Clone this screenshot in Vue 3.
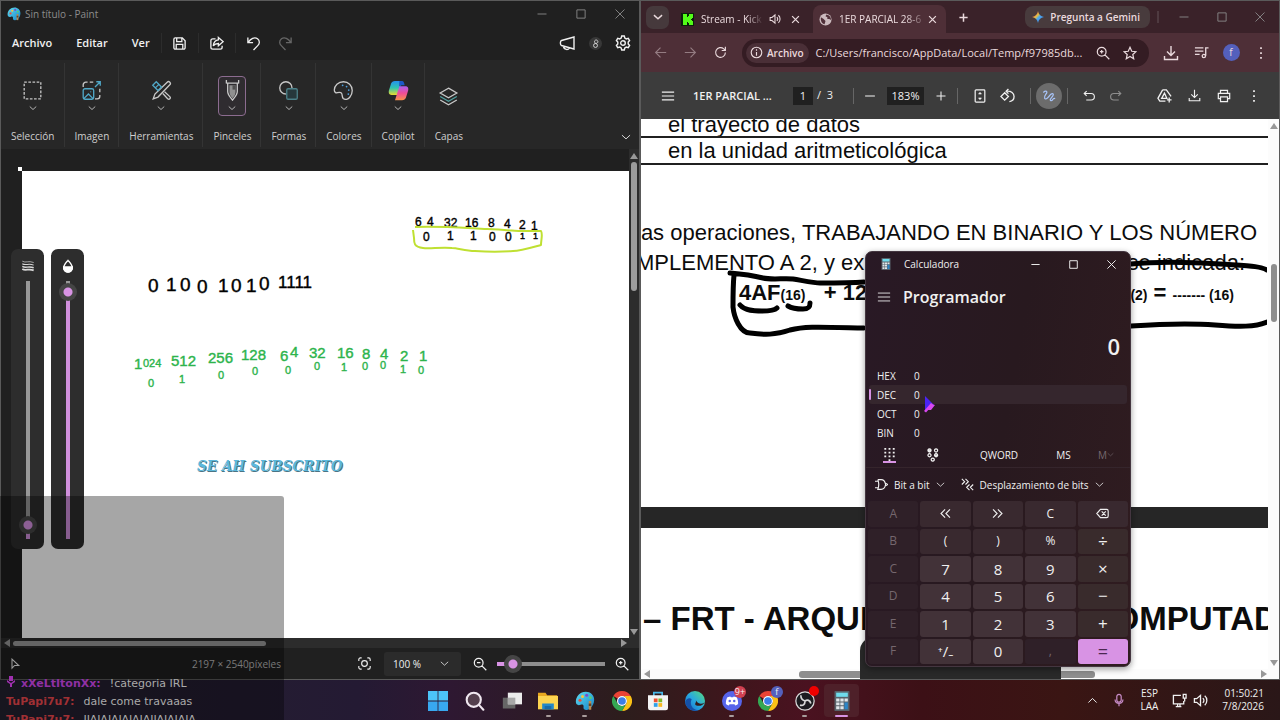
<template>
  <div class="desktop">
    <svg class="defs" aria-hidden="true">
      <defs>
        <linearGradient id="gPaint" x1="0" y1="0" x2="1" y2="1">
          <stop offset="0" stop-color="#5fdcf2" />
          <stop offset="1" stop-color="#1685c9" />
        </linearGradient>
        <linearGradient id="gEdge" x1="0" y1="1" x2="1" y2="0">
          <stop offset="0" stop-color="#1565c8" />
          <stop offset=".5" stop-color="#28a8e0" />
          <stop offset="1" stop-color="#58dc78" />
        </linearGradient>
        <linearGradient id="gCopA" x1="0" y1="0" x2="0" y2="1">
          <stop offset="0" stop-color="#2490f0" />
          <stop offset=".5" stop-color="#30c4b0" />
          <stop offset="1" stop-color="#e8dc30" />
        </linearGradient>
        <linearGradient id="gCopB" x1="0" y1="0" x2="0" y2="1">
          <stop offset="0" stop-color="#a860f0" />
          <stop offset=".5" stop-color="#f04c98" />
          <stop offset="1" stop-color="#f8904c" />
        </linearGradient>
        <linearGradient id="gGem" x1="0" y1="0" x2="1" y2="1">
          <stop offset=".2" stop-color="#ea5a50" />
          <stop offset=".4" stop-color="#e8c040" />
          <stop offset=".55" stop-color="#4aa8f0" />
          <stop offset="1" stop-color="#4080f0" />
        </linearGradient>
        <symbol id="chrome" viewBox="0 0 24 24">
          <path fill="#ea4335" d="M12 0a12 12 0 0 1 10.400 6H12a6 6 0 0 0-5.200 3L1.600 6A12 12 0 0 1 12 0z" />
          <path fill="#fbc116" d="M22.400 6A12 12 0 0 1 12 24l5.200-9A6 6 0 0 0 12 6z" />
          <path fill="#34a853" d="M1.600 6l5.200 9a6 6 0 0 0 10.400 0L12 24A12 12 0 0 1 1.600 6z" />
          <circle cx="12" cy="12" r="6" fill="#fff" />
          <circle cx="12" cy="12" r="4.600" fill="#3b7de8" />
        </symbol>
        <symbol id="palette" viewBox="0 0 24 24">
          <path fill="url(#gPaint)" d="M13 1C6 1 1 6.500 1 13c0 2.500 1.500 4 3.500 4 2.500 0 3.500-1.500 5-.5 1.800 1.200-.2 3.500 1.500 5.500 1.500 1.500 5 .8 7-1 3-2.500 5-6 5-10.500C23 5 18.500 1 13 1z" />
          <circle cx="6" cy="11" r="1.800" fill="#e8503c" />
          <circle cx="9" cy="6.500" r="1.800" fill="#f8c43c" />
          <circle cx="14" cy="5" r="1.800" fill="#7c4cc8" />
          <circle cx="18.500" cy="8" r="1.600" fill="#58d070" />
          <path fill="#b98a50" d="M16.500 12h3v10.500h-3z" />
          <path fill="#6a4424" d="M16.500 15h3v3h-3z" />
        </symbol>
        <symbol id="calc" viewBox="0 0 24 24">
          <path fill="#58626a" d="M4 0h16a1 1 0 0 1 1 1v22a1 1 0 0 1-1 1H4a1 1 0 0 1-1-1V1a1 1 0 0 1 1-1z" />
          <path fill="#6fdcec" d="M5 2h14v5H5z" />
          <path fill="#dfe6ea" d="M5 9h4v3.500H5zM10 9h4v3.500h-4zM15 9h4v3.500h-4zM5 13.700h4v3.500H5zM10 13.700h4v3.500h-4zM5 18.400h4V22H5zM10 18.400h4V22h-4z" />
          <path fill="#2a86c8" d="M15 13.700h4V22h-4z" />
        </symbol>
      </defs>
    </svg>

    <main class="windows">
      <!-- Paint -->
      <section class="window paint">
        <header class="paint-title">
          <svg class="app-icon"><use href="#palette" /></svg>
          <span>Sin título - Paint</span>
          <div class="window-buttons dim">
            <button v-for="name in ['min', 'max', 'close']" :key="name" :aria-label="name"><Icon :name="name" :size="12" /></button>
          </div>
        </header>

        <nav class="paint-menu">
          <button class="menu-item">Archivo</button>
          <button class="menu-item">Editar</button>
          <button class="menu-item">Ver</button>
          <button class="menu-tool" aria-label="Guardar"><Icon name="save" :size="15" /></button>
          <button class="menu-tool" aria-label="Compartir"><Icon name="share" :size="15" /></button>
          <button class="menu-tool" aria-label="Deshacer"><Icon name="undo" :size="15" /></button>
          <button class="menu-tool plain" aria-label="Rehacer"><Icon name="redo" :size="15" /></button>
          <div class="menu-right">
            <button aria-label="Comentarios"><Icon name="megaphone" :size="16" /></button>
            <button aria-label="Cuenta"><span class="account"><Icon name="person" :size="9" /></span></button>
            <button aria-label="Configuración"><Icon name="gear" :size="16" /></button>
          </div>
        </nav>

        <div class="ribbon">
          <div v-for="group in ribbon" :key="group.label" class="ribbon-group">
            <button class="ribbon-button" :class="{ selected: group.selected }" :aria-label="group.label">
              <svg class="ribbon-icon" viewBox="0 0 24 24" fill="none" stroke="#c8c8c8" stroke-width="1.500">
                <g v-if="group.icon === 'select'">
                  <rect x="2.500" y="2.500" width="19" height="19" stroke-dasharray="3 1.750" />
                </g>
                <g v-else-if="group.icon === 'image'">
                  <path d="M2.500 8V5.500a3 3 0 0 1 3-3h2M10 2.500h4M21.500 10v4M21.500 17v1.500a3 3 0 0 1-3 3H16" />
                  <path stroke="#50a8c8" d="M16 8l6-6M17.500 2H22v4.500M4.500 10h8a2 2 0 0 1 2 2v8a2 2 0 0 1-2 2h-8a2 2 0 0 1-2-2v-8a2 2 0 0 1 2-2zM3.500 21l5-5 5 5M11 13v1" />
                </g>
                <g v-else-if="group.icon === 'tools'">
                  <path d="M18.500 2.500a2.100 2.100 0 0 1 3 3L8 19.500l-5.500 2 2-5.500zM13.500 15.500l5.500 6c2 1.500 4-1 2.500-2.500l-6-5.500" />
                  <path stroke="#50a8c8" d="M2 6l4-4 6 6-4 4zM5 9l4-4" />
                </g>
                <g v-else-if="group.icon === 'brush'">
                  <path d="M5 0v4M19 0v4M5 3.500h14M6.500 4v9c0 4 3.500 7 5.500 10 2-3 5.500-6 5.500-10V4" />
                  <path fill="#909090" stroke="none" d="M8.500 6h7v8c0 3-2 5-3.500 7-1.500-2-3.500-4-3.500-7z" />
                  <path fill="#505050" stroke="none" d="M12 6h3.500v5H12z" />
                </g>
                <g v-else-if="group.icon === 'shapes'">
                  <path d="M9 16A7 7 0 1 1 16 9" />
                  <rect x="10" y="10" width="12" height="12" rx="1.500" stroke="#4c8088" fill="#26383c" />
                </g>
                <g v-else-if="group.icon === 'palette'">
                  <path d="M12 2C6 2 1.500 6.500 1.500 11.500c0 2.500 1.800 3.500 3.500 3s3.500-1 4.700.5c1.300 1.700.3 4.500 2 6.200 2 1.800 5.500 1 7.500-1.500 1.800-2.200 2.800-5 2.800-7.700C22 6 17.500 2 12 2z" />
                  <path stroke="#4ca0e0" stroke-width="2" stroke-linecap="round" d="M11 6h.01M15.500 7.500h.01M18 11.500h.01M17.500 16h.01" />
                </g>
                <g v-else-if="group.icon === 'copilot'" stroke="none">
                  <path fill="url(#gCopA)" d="M8 1h8l-5 16H4c-3 0-3.500-2.500-3-5L3.500 4C4.300 2 5.500 1 8 1z" />
                  <path fill="#1c58c8" d="M13 1h3c2 0 2.500 2 3 5h-3c-2 0-3 1-3.500 2.500z" />
                  <path fill="url(#gCopB)" d="M16 23H8l5-16h7c3 0 3.500 2.500 3 5l-2.500 8c-.8 2-2 3-4.500 3z" />
                </g>
                <g v-else>
                  <path d="M12 2.500l9.500 5.500L12 13.500 2.500 8zM2.500 16l9.500 5.500 9.500-5.500" />
                  <path stroke="#50a0a0" d="M2.500 12l9.500 5.500 9.500-5.500" />
                </g>
              </svg>
              <Icon v-if="!group.single" name="chevron" :size="8" />
            </button>
            <span class="ribbon-label">{{ group.label }}</span>
          </div>
          <button class="ribbon-more" aria-label="Más"><Icon name="chevron" :size="10" /></button>
        </div>

        <div class="workspace">
          <div class="stage">
            <i class="handle"></i>
            <div class="canvas">
              <svg class="ink" viewBox="22 171 607 467" width="607" height="467">
                <g v-for="(layer, i) in ink" :key="i" :fill="layer.color" :stroke="layer.color" :font-size="layer.size">
                  <text v-for="(mark, j) in layer.marks" :key="j" :x="mark[0]" :y="mark[1]">{{ mark[2] }}</text>
                </g>
                <path fill="none" stroke="#bfe032" stroke-width="2" stroke-linejoin="round" d="M415 227C440 226 465 228 487 229S515 231 520 231L541 231C543 234 541 240 541 245C530 248 520 251 513 251C500 252 490 252 475 251C465 251 458 248 452 248C440 247 430 249 423 248C414 247 414 243 414 238L413 230" />
              </svg>
            </div>
          </div>
          <div class="scroll-y">
            <i class="arrow up"></i>
            <i class="thumb"></i>
            <i class="arrow down"></i>
          </div>
          <div class="scroll-x">
            <i class="arrow left"></i>
            <i class="thumb"></i>
            <i class="arrow right"></i>
          </div>
          <div class="brush-panels">
            <label class="brush-panel">
              <svg viewBox="0 0 16 16" width="14" height="14" fill="none" stroke="#d8d8d8"><path stroke-width=".8" d="M1.500 2.500c4 2.500 7-1 13 1.500" /><path stroke-width="1.200" d="M1.500 5.500c4 2.500 7-1 13 1.500" /><path stroke-width="1.600" d="M1.500 8.500c4 2.500 7-1 13 1.500" /><path stroke-width="2" d="M1.500 11.500c4 2.500 7-1 13 1.500" /></svg>
              <input v-model="brushSize" class="slider vertical" type="range" aria-label="Tamaño" :style="{ '--fill': brushSize + '%' }" />
            </label>
            <label class="brush-panel">
              <svg viewBox="0 0 16 16" width="14" height="14" fill="none" stroke="#fff" stroke-width="1.500"><path d="M8 1.500C5.500 4.500 3 7 3 10a5 5 0 0 0 10 0c0-3-2.500-5.500-5-8.500z" /><path fill="#fff" d="M3 9h10c.5 8-10.500 8-10 0z" /></svg>
              <input v-model="opacity" class="slider vertical" type="range" aria-label="Opacidad" :style="{ '--fill': opacity + '%' }" />
            </label>
          </div>
        </div>

        <footer class="paint-status">
          <Icon name="pointer" :size="12" />
          <span class="dimensions">2197 × 2540píxeles</span>
          <button aria-label="Ajustar"><Icon name="focus" :size="13" /></button>
          <div class="zoom-box">
            <select aria-label="Zoom">
              <option>100 %</option>
            </select>
            <Icon name="chevron" :size="9" />
          </div>
          <button aria-label="Alejar"><Icon name="zoomOut" :size="14" /></button>
          <input v-model="zoom" class="slider" type="range" aria-label="Nivel de zoom" :style="{ '--fill': zoom + '%' }" />
          <button aria-label="Acercar"><Icon name="zoomIn" :size="14" /></button>
        </footer>
      </section>

      <!-- Chrome -->
      <section class="window browser">
        <div class="tab-strip">
          <button class="tab-search" aria-label="Buscar pestañas"><Icon name="chevron" :size="10" /></button>
          <div class="tab">
            <svg viewBox="0 0 13 13" width="13" height="13"><path fill="#0c1f0c" d="M0 0h13v13H0z" /><path fill="#53fc18" d="M2 1h4v3h1V3h1V1h4v4h-1v1h-1v1h1v1h1v4H8v-2H7V9H6v3H2z" /></svg>
            <span class="tab-title">Stream - Kick</span>
            <Icon name="speaker" :size="12" />
            <button aria-label="Cerrar pestaña"><Icon name="close" :size="9" /></button>
          </div>
          <div class="tab active">
            <svg viewBox="0 0 14 14" width="13" height="13"><circle cx="7" cy="7" r="6.500" fill="#cbbabe" /><path fill="#503039" d="M2 4.500l3 2 2 2-1 3.500C3.500 11.500 1.500 9 2 4.500zM8 1.500l-1 2 2 1v2h2l2 1c0-3-1.500-5.500-5-6z" /></svg>
            <span class="tab-title">1ER PARCIAL 28-6</span>
            <button aria-label="Cerrar pestaña"><Icon name="close" :size="9" /></button>
          </div>
          <button class="new-tab" aria-label="Nueva pestaña"><Icon name="plus" :size="11" /></button>
          <button class="gemini">
            <svg viewBox="0 0 14 14" width="12" height="12"><path fill="url(#gGem)" d="M7 0c.6 4 3 6.400 7 7-4 .6-6.400 3-7 7-.6-4-3-6.400-7-7 4-.6 6.400-3 7-7z" /></svg>
            Pregunta a Gemini
          </button>
          <div class="window-buttons dim">
            <button v-for="name in ['min', 'max', 'close']" :key="name" :aria-label="name"><Icon :name="name" :size="12" /></button>
          </div>
        </div>

        <div class="address-row">
          <button class="faded" aria-label="Atrás"><Icon name="back" :size="13" /></button>
          <button class="faded" aria-label="Adelante"><Icon name="forward" :size="13" /></button>
          <button aria-label="Recargar"><Icon name="reload" :size="13" /></button>
          <div class="omnibox">
            <span class="chip"><Icon name="info" :size="13" />Archivo</span>
            <input type="text" aria-label="Dirección" value="C:/Users/francisco/AppData/Local/Temp/f97985db..." />
            <button aria-label="Zoom"><Icon name="zoomIn" :size="14" /></button>
            <button aria-label="Favorito"><Icon name="star" :size="14" /></button>
          </div>
          <button aria-label="Descargas"><Icon name="download" :size="16" /></button>
          <button aria-label="Multimedia"><Icon name="playlist" :size="15" /></button>
          <button aria-label="Perfil"><span class="avatar">f</span></button>
          <button aria-label="Menú"><Icon name="dots" :size="14" /></button>
        </div>

        <div class="pdf-bar">
          <button aria-label="Menú"><Icon name="menu" :size="14" /></button>
          <strong class="pdf-name">1ER PARCIAL ...</strong>
          <div class="pdf-page"><input type="text" aria-label="Página" value="1" /> <span>/&nbsp; 3</span></div>
          <i class="rule"></i>
          <div class="pdf-zoom">
            <button aria-label="Alejar"><Icon name="minus" :size="12" /></button>
            <input type="text" aria-label="Zoom" value="183%" />
            <button aria-label="Acercar"><Icon name="plus" :size="12" /></button>
          </div>
          <i class="rule"></i>
          <div class="pdf-tools">
            <button aria-label="Ajustar página"><Icon name="fit" :size="14" /></button>
            <button aria-label="Girar"><Icon name="rotate" :size="15" /></button>
          </div>
          <i class="rule"></i>
          <button class="draw" aria-label="Dibujar"><Icon name="squiggle" :size="14" /></button>
          <i class="rule"></i>
          <div class="pdf-tools">
            <button aria-label="Deshacer"><Icon name="undoFlat" :size="13" /></button>
            <button class="faded" aria-label="Rehacer"><Icon name="redoFlat" :size="13" /></button>
          </div>
          <div class="pdf-right">
            <button aria-label="Guardar en Drive"><Icon name="drive" :size="15" /></button>
            <button aria-label="Descargar"><Icon name="download" :size="13" /></button>
            <button aria-label="Imprimir"><Icon name="print" :size="14" /></button>
            <button aria-label="Más"><Icon name="dots" :size="14" /></button>
          </div>
        </div>

        <div class="pdf-view">
          <div class="pages">
            <article class="page first">
              <div class="table-row cut">el trayecto de datos</div>
              <div class="table-row">en la unidad aritmeticológica</div>
              <div class="exercise">
                <p>las operaciones, TRABAJANDO EN BINARIO Y LOS NÚMERO</p>
                <p class="split"><span>MPLEMENTO A 2, y exp</span><span>se indicada:</span></p>
                <p class="split formula">
                  <span>4AF<small>(16)</small>&nbsp;&nbsp; + 12</span>
                  <span><small>(2)</small> = <small>------- (16)</small></span>
                </p>
              </div>
              <svg class="marks" viewBox="641 119 626 388" width="626" height="388">
                <path d="M730 273C742 274 755 276 763 278S785 278 793 279C805 281 815 283 820 283S850 283 864 282M734 275C733 285 733 297 733 307C734 317 740 333 750 333C765 335 775 335 790 330C805 326 820 327 864 328M740 305C745 311 755 311 762 311S775 310 777 308M788 306C793 309 797 309 803 309S810 307 810 303M1131 264C1160 261 1190 262 1220 264S1260 266 1267 270M1131 326C1160 324 1190 323 1215 325S1255 327 1267 322" />
              </svg>
            </article>
            <article class="page second">
              <h1>– FRT - ARQUITECTURA DE COMPUTAD</h1>
            </article>
          </div>
          <div class="scroll-y light">
            <i class="arrow up"></i>
            <i class="thumb"></i>
            <i class="arrow down"></i>
          </div>
          <div class="scroll-x light">
            <i class="arrow left"></i>
            <i class="thumb"></i>
            <i class="arrow right"></i>
          </div>
          <div class="share-bar"></div>
        </div>
      </section>
    </main>

    <!-- Calculadora -->
    <section class="calculator">
      <header class="calc-title">
        <svg class="calc-icon"><use href="#calc" /></svg>
        <span>Calculadora</span>
        <div class="window-buttons">
          <button v-for="name in ['min', 'max', 'close']" :key="name" :aria-label="name"><Icon :name="name" :size="11" /></button>
        </div>
      </header>
      <div class="calc-mode">
        <button aria-label="Navegación"><Icon name="menu" :size="14" /></button>
        <h2>Programador</h2>
      </div>
      <output class="calc-display">0</output>
      <button v-for="base in bases" :key="base" class="base" :class="{ current: base === 'DEC' }">
        <span>{{ base }}</span><span>0</span>
      </button>
      <div class="calc-tabs">
        <button class="on" aria-label="Teclado completo"><Icon name="keypad" :size="15" /></button>
        <button aria-label="Alternar bits"><Icon name="bits" :size="14" /></button>
        <button>QWORD</button>
        <button>MS</button>
        <button class="off">M<Icon name="chevron" :size="7" /></button>
      </div>
      <div class="calc-menus">
        <button><Icon name="gate" :size="13" />Bit a bit<Icon name="chevron" :size="9" /></button>
        <button><Icon name="shift" :size="13" />Desplazamiento de bits<Icon name="chevron" :size="9" /></button>
      </div>
      <div class="keys">
        <button v-for="key in keys" :key="key.t" :class="key.c" :aria-label="key.t">
          <Icon v-if="key.i" :name="key.i" :size="13" />
          <template v-else>{{ key.t }}</template>
        </button>
      </div>
      <svg class="cursor" viewBox="0 0 11 17" width="11" height="17"><path fill="#4a24f4" d="M1 0l9 9-9 7z" /><path fill="#d848f0" d="M0 15l7-8 2 1.500L2 16.500zM4 14l5-5.500 2 .5-4 5z" /></svg>
    </section>

    <div class="alert-text">SE AH SUBSCRITO</div>
    <div class="shade"></div>

    <footer class="taskbar">
      <div class="apps">
        <button v-for="app in apps" :key="app" :class="{ running: running.includes(app), current: app === 'calc' }" :aria-label="app">
          <svg viewBox="0 0 24 24" width="20" height="20">
            <g v-if="app === 'inicio'" fill="#4cc4f8"><path d="M0 0h11.500v11.500H0zM12.500 0H24v11.500H12.500z" /><path fill="#38a8f0" d="M0 12.500h11.500V24H0zM12.500 12.500H24V24H12.500z" /></g>
            <g v-else-if="app === 'buscar'" fill="#54404e" stroke="#f0e8f0" stroke-width="2.500" stroke-linecap="round"><circle cx="10.500" cy="10.500" r="8.500" /><path d="M17 17l5 5.500" /></g>
            <g v-else-if="app === 'vistas'"><path fill="#666" d="M1 8h15v13H1z" /><path fill="#ececec" d="M7 2h17v14H7z" /><path fill="#a8a8a8" d="M7 8h9v8H7z" /></g>
            <g v-else-if="app === 'archivos'"><path fill="#e8a820" d="M0 2h9l2 3h12v16H0z" /><path fill="#fcd450" d="M0 6h24v16H0z" /><path fill="#2488c8" d="M5 15h14v7H5z" /><path fill="#186aa8" d="M8 18h8v4H8z" /></g>
            <use v-else-if="app === 'paint'" href="#palette" />
            <use v-else-if="app === 'chrome' || app === 'perfil'" href="#chrome" />
            <g v-else-if="app === 'tienda'"><path fill="none" stroke="#48b8e8" stroke-width="2" d="M7 7V2h10v5" /><path fill="#f4f4f4" d="M0 5h24v15a3 3 0 0 1-3 3H3a3 3 0 0 1-3-3z" /><path fill="#f05030" d="M7 9h4.500v4.500H7z" /><path fill="#80b828" d="M12.500 9H17v4.500h-4.500z" /><path fill="#30a0e8" d="M7 14.500h4.500V19H7z" /><path fill="#f8b820" d="M12.500 14.500H17V19h-4.500z" /></g>
            <g v-else-if="app === 'edge'"><circle cx="12" cy="12" r="12" fill="url(#gEdge)" /><path fill="#1450a8" d="M8 10c-3 6 1 13 8 13-8 3-16-3-15.500-11C3 8 6 8 8 10z" /><path fill="#331c1e" d="M13 17c-2-2 1-3 0-6 3 5 7 5 10 3-1 3-6 5-10 3z" /></g>
            <g v-else-if="app === 'discord'"><circle cx="12" cy="12" r="12" fill="#5664ea" /><path fill="#fff" d="M6.500 7.500L10 6.500l.6 1h2.800l.6-1 3.500 1c1.500 2.500 2 5 1.800 8-1 1-2.300 1.500-3.500 1.800L15 16H9l-.8 1.300c-1.200-.3-2.500-.8-3.500-1.800-.2-3 .3-5.500 1.800-8z" /><circle cx="9.300" cy="12" r="1.500" fill="#5664ea" /><circle cx="14.700" cy="12" r="1.500" fill="#5664ea" /></g>
            <g v-else-if="app === 'obs'" fill="none" stroke="#d8d8d8"><circle cx="12" cy="12" r="11" fill="#1c1c20" stroke-width="1.500" /><path stroke-width="2" d="M7 5c0 4 2 6 5 7M12 12c3-2 6-1 7 3M12 12c0 4-2 6-6 5" /></g>
            <use v-else href="#calc" />
          </svg>
          <em v-if="app === 'discord'" class="badge red">9+</em>
          <em v-if="app === 'perfil'" class="badge blue">f</em>
          <em v-if="app === 'obs'" class="badge dot"></em>
        </button>
      </div>
      <div class="tray">
        <button aria-label="Iconos ocultos"><Icon name="chevronUp" :size="11" /></button>
        <button class="mic" aria-label="Micrófono"><Icon name="mic" :size="14" /></button>
        <button class="lang">ESP<br />LAA</button>
        <button class="status"><Icon name="monitor" :size="15" /><Icon name="speaker" :size="15" /></button>
        <time>01:50:21<br />7/8/2026</time>
      </div>
    </footer>

    <ul class="chat">
      <li v-for="(line, i) in chat" :key="i">
        <svg v-if="line.mod" viewBox="0 0 8 11" width="10" height="11"><path fill="#a030b0" d="M2 0h4v5H2zM0 4l4 3 4-3v2L5 8v3H3V8L0 6z" /></svg>
        <b :class="{ mod: line.mod }">{{ line.user }}:</b>{{ line.text }}
      </li>
    </ul>
  </div>
</template>

<script setup>
import { h, ref } from 'vue';

const paths = {
  min: 'M2 8h12',
  max: 'M2.500 2.500h11v11h-11z',
  close: 'M2 2l12 12M14 2L2 14',
  plus: 'M8 2v12M2 8h12',
  minus: 'M1.500 8h13',
  menu: 'M1 3.500h14M1 8h14M1 12.500h14',
  chevron: 'M1.500 5L8 11l6.500-6',
  chevronUp: 'M2 11l6-6 6 6',
  save: 'M2 3.500A1.500 1.500 0 0 1 3.500 2H11l3 3v7.500a1.500 1.500 0 0 1-1.500 1.500h-9A1.500 1.500 0 0 1 2 12.500zM5 2v4h5.500V2M4.500 14V9h7v5',
  share: 'M7 3H4a2 2 0 0 0-2 2v7a2 2 0 0 0 2 2h8a2 2 0 0 0 2-2v-1.500M10 1.500L15 6l-5 4.500V8C7.500 8 6 8.500 4.500 10.500 5 7 6.500 4.500 10 4.200z',
  undo: 'M2 1.500V7h5.500M2.300 6.700C5 3 9 .5 12.300 3c3 2.500 2 5.500.2 7.300L8 15',
  redo: 'M14 1.500V7H8.500M13.700 6.700C11 3 7 .5 3.700 3c-3 2.500-2 5.500-.2 7.300L8 15',
  undoFlat: 'M4.500 2.500L1.500 5.500l3 3M1.500 5.500H10a4 4 0 0 1 0 8H4',
  redoFlat: 'M11.500 2.500l3 3-3 3M14.500 5.500H6a4 4 0 0 0 0 8h6',
  megaphone: 'M15 2v12L2.500 10.500C1 10 1 6 2.500 5.500zM4.500 11c0 4 5.500 4.500 6 1.500',
  person: 'M8 2a3 3 0 1 1 0 5.500A3 3 0 0 1 8 2zM8 8a3.500 3.500 0 1 1 0 7 3.500 3.500 0 0 1 0-7',
  gear: 'M6.700 1h2.600l.5 2 1.500.9 2-.6 1.300 2.300L13.200 7v2l1.400 1.400-1.300 2.300-2-.6-1.500.9-.5 2H6.700l-.5-2-1.500-.9-2 .6-1.300-2.300L2.800 9V7L1.400 5.600l1.300-2.300 2 .6L6.200 3zM8 5.700a2.300 2.300 0 1 0 0 4.600 2.300 2.300 0 0 0 0-4.600',
  pointer: 'M4 1.500v12l3.500-3.500H13z',
  focus: 'M1 5V3a2 2 0 0 1 2-2h1.500M11.500 1H13a2 2 0 0 1 2 2v2M15 11v2a2 2 0 0 1-2 2h-1.500M4.500 15H3a2 2 0 0 1-2-2v-2M8 4.500a3.500 3.500 0 1 0 0 7 3.500 3.500 0 0 0 0-7',
  zoomIn: 'M6.500 1.500a5 5 0 1 0 0 10 5 5 0 0 0 0-10M10.200 10.200l5 5M6.500 4.500v4M4.500 6.500h4',
  zoomOut: 'M6.500 1.500a5 5 0 1 0 0 10 5 5 0 0 0 0-10M10.200 10.200l5 5M4.500 6.500h4',
  speaker: 'M1.500 6v4H4l4 3.500v-11L4 6zM10.500 5.500c1.500 1.500 1.500 3.500 0 5M12.500 3c3 2.500 3 7.500 0 10',
  back: 'M15 8H2M8 2L2 8l6 6',
  forward: 'M1 8h13M8 2l6 6-6 6',
  reload: 'M14 8a6 6 0 1 1-2-4.500L14 5.500M14 1v4.500H9.500',
  info: 'M8 1.500a6.500 6.500 0 1 0 0 13 6.500 6.500 0 0 0 0-13M8 7.500V12M8 4v1.800',
  star: 'M8 1.500l2 4.500 4.800.5-3.600 3.200 1 4.800L8 12l-4.200 2.500 1-4.800L1.200 6.500 6 6z',
  download: 'M8 1v9M4 6.500L8 10.500l4-4M1.500 11v3.500h13V11',
  playlist: 'M1 3h9M1 6.500h9M1 10h5M12.500 11.500V3H15.500M10.500 10a1.700 1.700 0 1 0 .01 3.500 1.700 1.700 0 0 0 0-3.500',
  dots: 'M7 2.500h2M7 8h2M7 13.500h2',
  fit: 'M3.500 1h9A1 1 0 0 1 13.500 2v12a1 1 0 0 1-1 1h-9a1 1 0 0 1-1-1V2a1 1 0 0 1 1-1M6.500 6L8 4.500 9.500 6M6.500 10L8 11.500 9.500 10',
  rotate: 'M5 5L1 9l4 4 4-4zM9 1L6.500 3.500 9 6M7 3.500c5-.5 8 2 8 5.500 0 3-2 5-5 5.500',
  squiggle: 'M1.500 4c2-2 4.500-2 4 0S2 8 3 10.500c.8 1.800 3 .5 4.500-1.500 1.500-2 3.500-4.500 5-3.500 1.800 1.200-2.500 5-3 6.500s1.500 2 2.500.5 1.500-2.500 3-1.500',
  drive: 'M6 2h4l5 7M6 2L1 11l2 3h6M8 5.500L5 11h5.500zM13 10v5.500M10.500 12.700h5',
  print: 'M4 5V1.500h8V5M4 11H1.500V5h13v6H12M4 9h8v5.500H4z',
  keypad: 'M2.500 2h2M7 2h2M11.500 2h2M2.500 6h2M7 6h2M11.500 6h2M2.500 10h2M7 10h2M11.500 10h2M7 14h2',
  bits: 'M4 1a1.800 1.800 0 1 0 .01 0M4 2.500a.4.400 0 1 0 .01 0M11.500 1a1.800 1.800 0 1 0 .01 0M4 6.500a1.800 1.800 0 1 0 .01 0M11.500 6.500a1.800 1.800 0 1 0 .01 0M11.500 8a.4.400 0 1 0 .01 0M7.700 11.500a1.800 1.800 0 1 0 .01 0',
  gate: 'M0 4h3.500M0 12h3.500M3.500 2h4c3 0 5 3 5.500 6-.5 3-2.500 6-5.500 6h-4c1.500-4 1.500-8 0-12M13 6.500L15.500 8 13 9.500',
  shift: 'M1 1l3.500 3.500L1 8M5.500 1L9 4.500 5.500 8M10.500 8L7 11.500l3.500 3.500M15 8l-3.500 3.500L15 15',
  shl: 'M7.500 3L2.500 8l5 5M13.500 3l-5 5 5 5',
  shr: 'M2.500 3l5 5-5 5M8.500 3l5 5-5 5',
  erase: 'M5.500 3H13a2 2 0 0 1 2 2v6a2 2 0 0 1-2 2H5.500L1 8zM7 5.500l5 5M12 5.500l-5 5',
  mic: 'M8 1.500a2.500 2.500 0 0 0-2.500 2.500v4a2.500 2.500 0 0 0 5 0V4A2.500 2.500 0 0 0 8 1.500M3.500 7.500c0 6 9 6 9 0M8 12v3',
  monitor: 'M9.500 2.500h-8v9h11V8.500M4 14.500h6M6 11.500v3M8.500 11.500v3M12 1.500h3v4h-3zM13.500 5.500v3.500',
};

const Icon = ({ name, size }) =>
  h('svg', { class: ['icon', name], viewBox: '0 0 16 16', width: size, height: size }, [
    h('path', { d: paths[name] }),
  ]);
Icon.props = ['name', 'size'];

const brushSize = ref(2);
const opacity = ref(99);
const zoom = ref(8);

const ribbon = [
  { label: 'Selección', icon: 'select' },
  { label: 'Imagen', icon: 'image' },
  { label: 'Herramientas', icon: 'tools' },
  { label: 'Pinceles', icon: 'brush', selected: true },
  { label: 'Formas', icon: 'shapes' },
  { label: 'Colores', icon: 'palette' },
  { label: 'Copilot', icon: 'copilot' },
  { label: 'Capas', icon: 'layers', single: true },
];

// x, baseline and digits of everything written on the canvas
const ink = [
  {
    color: '#000',
    size: 19,
    marks: [
      [148, 292, '0'], [166, 291, '1'], [180, 291, '0'], [197, 293, '0'], [218, 292, '1'], [231, 292, '0'],
      [246, 292, '1'], [259, 290, '0'],
    ],
  },
  {
    color: '#000',
    size: 17,
    marks: [[278, 288, '1111']],
  },
  {
    color: '#000',
    size: 12,
    marks: [
      [415, 226, '6'], [427, 226, '4'], [444, 227, '32'], [465, 227, '16'], [488, 227, '8'], [504, 228, '4'],
      [519, 229, '2'], [531, 230, '1'], [423, 241, '0'], [447, 240, '1'], [470, 240, '1'], [489, 241, '0'],
      [505, 241, '0'],
    ],
  },
  {
    color: '#000',
    size: 9,
    marks: [[520, 239, '1'], [533, 239, '1']],
  },
  {
    color: '#2db44c',
    size: 15,
    marks: [
      [134, 369, '1'], [171, 366, '512'], [208, 363, '256'], [241, 360, '128'], [280, 361, '6'], [290, 357, '4'],
      [309, 358, '32'], [337, 358, '16'], [362, 359, '8'], [380, 359, '4'], [400, 361, '2'], [419, 361, '1'],
    ],
  },
  {
    color: '#2db44c',
    size: 11,
    marks: [
      [143, 367, '024'], [148, 387, '0'], [179, 383, '1'], [218, 379, '0'], [252, 375, '0'], [285, 374, '0'],
      [314, 370, '0'], [341, 371, '1'], [362, 370, '0'], [380, 369, '0'], [400, 373, '1'], [418, 374, '0'],
    ],
  },
];

const bases = ['HEX', 'DEC', 'OCT', 'BIN'];

const keys = [
  { t: 'A', c: 'letter' }, { t: '<<', c: 'fn', i: 'shl' }, { t: '>>', c: 'fn', i: 'shr' }, { t: 'C', c: 'fn' }, { t: 'Retroceso', c: 'fn', i: 'erase' },
  { t: 'B', c: 'letter' }, { t: '(', c: 'fn' }, { t: ')', c: 'fn' }, { t: '%', c: 'fn' }, { t: '÷', c: 'op' },
  { t: 'C ', c: 'letter' }, { t: '7', c: 'digit' }, { t: '8', c: 'digit' }, { t: '9', c: 'digit' }, { t: '×', c: 'op' },
  { t: 'D', c: 'letter' }, { t: '4', c: 'digit' }, { t: '5', c: 'digit' }, { t: '6', c: 'digit' }, { t: '−', c: 'op' },
  { t: 'E', c: 'letter' }, { t: '1', c: 'digit' }, { t: '2', c: 'digit' }, { t: '3', c: 'digit' }, { t: '+', c: 'op' },
  { t: 'F', c: 'letter' }, { t: '⁺/₋', c: 'digit' }, { t: '0', c: 'digit' }, { t: ',', c: 'letter' }, { t: '=', c: 'equals' },
];

const apps = ['inicio', 'buscar', 'vistas', 'archivos', 'paint', 'chrome', 'tienda', 'edge', 'discord', 'perfil', 'obs', 'calc'];
const running = ['archivos', 'paint', 'discord', 'perfil', 'obs', 'calc'];

const chat = [
  { user: 'xXeLtItonXx', text: '!categoria IRL', mod: true },
  { user: 'TuPapi7u7', text: 'dale come travaaas' },
  { user: 'TuPapi7u7', text: 'JJAJAJAJAJAJAJJAJAJAJA' },
];
</script>

<style>
body {
  margin: 0;
  overflow: hidden;
}
</style>

<style scoped>
.desktop {
  position: relative;
  display: flex;
  flex-direction: column;
  height: 100vh;
  overflow: hidden;
  background: #202020;
  color: #f0f0f0;
  font: 10px/16px "Open Sans", "Noto Sans", sans-serif;
}

.defs {
  position: absolute;
  width: 0;
  height: 0;
}

button,
input,
select {
  font: inherit;
  color: inherit;
}

button {
  display: flex;
  align-items: center;
  justify-content: center;
  padding: 0;
  border: none;
  background: none;
}

input,
select {
  box-sizing: border-box;
  padding: 0;
  border: none;
  outline: none;
}

p,
h1,
h2,
ul {
  margin: 0;
  padding: 0;
}

svg {
  flex: none;
}

.icon {
  display: block;
  fill: none;
  stroke: currentColor;
  stroke-width: 1.4;
}

.icon.dots,
.icon.keypad {
  stroke-width: 2;
}

.windows {
  flex: 1;
  display: grid;
  grid-template-columns: 1fr 1fr;
  min-height: 0;
}

.window {
  display: flex;
  flex-direction: column;
  min-width: 0;
  min-height: 0;
  border: 1px solid #5a5a5a;
  box-sizing: border-box;
}

.window-buttons {
  display: flex;
  margin-left: auto;
}

.window-buttons button {
  width: 39px;
}

.dim {
  color: #8a8a8a;
}

.dim .icon {
  stroke-width: 1.2;
}

/* Paint */
.paint {
  background: #202020;
}

.paint-title {
  display: flex;
  align-items: center;
  height: 25px;
  padding-left: 6px;
  color: #8c8c8c;
}

.app-icon {
  width: 14px;
  height: 14px;
  margin-right: 4px;
}

.paint-menu {
  display: flex;
  align-items: center;
  height: 34px;
}

.menu-item {
  padding: 0 11px;
  margin-right: 2px;
  font-size: 11px;
  font-weight: 600;
}

.menu-item:nth-child(3) {
  margin: 0;
}

.menu-tool {
  width: 37px;
  height: 20px;
  border-left: 1px solid #2c2c2c;
}

.menu-tool.plain {
  width: 28px;
  border: none;
  color: #666;
}

.menu-right {
  display: flex;
  margin-left: auto;
  padding-right: 2px;
}

.menu-right button {
  width: 28px;
}

.account {
  display: flex;
  align-items: center;
  justify-content: center;
  width: 13px;
  height: 13px;
  border-radius: 50%;
  background: #383838;
}

.ribbon {
  display: flex;
  height: 89px;
  background: #272727;
}

.ribbon-group {
  display: flex;
  flex-direction: column;
  align-items: center;
  padding: 0 9px 0 10px;
  margin: 3px 0 2px;
  border-right: 1px solid #343434;
}

.ribbon-group:nth-child(8) {
  border: none;
}

.ribbon-button {
  box-sizing: border-box;
  flex-direction: column;
  gap: 3px;
  width: 28px;
  height: 40px;
  margin-top: 13px;
  border: 1px solid transparent;
  border-radius: 4px;
}

.ribbon-button.selected {
  border-color: #8c6c90;
  background: #2f2c30;
}

.ribbon-icon {
  width: 21px;
  height: 21px;
}

.ribbon-label {
  margin-top: 12px;
  color: #cfcfcf;
}

.ribbon-more {
  align-self: flex-end;
  width: 26px;
  height: 24px;
  margin-left: auto;
}

.workspace {
  position: relative;
  flex: 1;
  display: grid;
  grid-template: 1fr 10px / 1fr 10px;
  min-height: 0;
}

.stage {
  min-height: 0;
  padding: 22px 0 0 21px;
  overflow: hidden;
}

.handle {
  position: absolute;
  top: 18px;
  left: 17px;
  width: 4px;
  height: 4px;
  background: #fff;
}

.canvas {
  height: 100%;
  overflow: hidden;
  background: #fff;
}

.ink {
  display: block;
  font-family: "Liberation Sans", Arial, sans-serif;
  stroke-width: 0.4;
}

.scroll-y,
.scroll-x {
  display: flex;
  align-items: center;
  justify-content: space-between;
  background: #2c2c2c;
}

.scroll-y {
  flex-direction: column;
  padding: 4px 0 3px;
}

.scroll-x {
  grid-column: 1 / -1;
  padding: 0 12px 0 3px;
}

.light {
  background: #fcfcfc;
}

.thumb {
  border-radius: 3px;
  background: #9c9c9c;
}

.scroll-y .thumb {
  width: 6px;
  height: 129px;
  margin: 3px 0 auto;
}

.scroll-x .thumb {
  width: 253px;
  height: 5px;
  margin: 0 auto 0 3px;
}

.arrow {
  border: 4px solid transparent;
}

.arrow.up {
  border-top: 0;
  border-bottom: 6px solid #989898;
}

.arrow.down {
  border-bottom: 0;
  border-top: 6px solid #989898;
}

.arrow.left {
  border-left: 0;
  border-right: 6px solid #989898;
}

.arrow.right {
  border-right: 0;
  border-left: 6px solid #989898;
}

.brush-panels {
  position: absolute;
  top: 100px;
  left: 10px;
  display: flex;
  gap: 7px;
}

.brush-panel {
  display: flex;
  flex-direction: column;
  align-items: center;
  gap: 8px;
  box-sizing: border-box;
  width: 33px;
  height: 300px;
  padding: 10px 0;
  border-radius: 7px;
  background: #2d2d2d;
}

.slider {
  appearance: none;
  width: 108px;
  height: 18px;
  margin: 0;
  background: linear-gradient(to right, #d893e4 var(--fill), #8e8e8e var(--fill)) center / 100% 4px no-repeat;
}

.slider.vertical {
  writing-mode: vertical-lr;
  direction: rtl;
  width: 18px;
  height: 258px;
  background: linear-gradient(to top, #d08fdc var(--fill), #989898 var(--fill)) center / 4px 100% no-repeat;
}

.slider::-webkit-slider-thumb {
  appearance: none;
  width: 18px;
  height: 18px;
  border-radius: 50%;
  background: radial-gradient(circle, #d893e4 4px, #454545 5px);
}

.paint-status {
  display: flex;
  align-items: center;
  height: 31px;
  padding: 0 10px 0 8px;
}

.pointer {
  margin-right: auto;
}

.dimensions {
  margin-right: 77px;
  color: #b8b8b8;
}

.zoom-box {
  display: flex;
  align-items: center;
  position: relative;
  margin: 0 12px 0 13px;
}

.zoom-box select {
  appearance: none;
  width: 77px;
  height: 24px;
  padding-left: 9px;
  border-radius: 3px;
  background: #2b2b2b;
}

.zoom-box .icon {
  position: absolute;
  right: 12px;
}

.paint-status .slider {
  margin: 0 10px;
}

/* Browser */
.browser {
  background: #4e2f37;
  color: #eadadd;
}

.tab-strip {
  display: flex;
  align-items: center;
  height: 32px;
  background: #3a2229;
}

.tab-search {
  width: 23px;
  height: 23px;
  margin: 0 4px 0 5px;
  border-radius: 7px;
  background: #46393c;
}

.tab {
  display: flex;
  align-items: center;
  box-sizing: border-box;
  width: 140px;
  height: 28px;
  padding: 0 13px 0 8px;
  align-self: flex-end;
}

.tab.active {
  width: 133px;
  padding: 0 9px 0 6px;
  border-radius: 8px 8px 0 0;
  background: #4e2f37;
}

.tab-title {
  flex: 1;
  margin-left: 7px;
  overflow: hidden;
  white-space: nowrap;
  mask-image: linear-gradient(to right, #000 75%, transparent);
}

.tab .speaker {
  margin: 0 10px 0 6px;
}

.tab .close,
.tab-search .icon,
.new-tab .icon {
  stroke-width: 2.2;
}

.new-tab {
  width: 34px;
}

.gemini {
  gap: 6px;
  height: 22px;
  margin-left: auto;
  padding: 0 10px 0 7px;
  border-radius: 8px;
  background: #483b3d;
  font-weight: 600;
}

.tab-strip .window-buttons {
  margin-left: 7px;
  border-left: 2px solid #4e3a40;
  padding-left: 6px;
}

.tab-strip .window-buttons button {
  width: 38px;
}

.address-row {
  display: flex;
  align-items: center;
  height: 39px;
  padding: 0 3px 0 4px;
}

.address-row > button {
  width: 30px;
}

.faded {
  opacity: 0.45;
}

.omnibox {
  flex: 1;
  display: flex;
  align-items: center;
  box-sizing: border-box;
  height: 28px;
  margin: 0 7px;
  padding: 0 6px 0 4px;
  border-radius: 14px;
  background: #341c23;
}

.chip {
  display: flex;
  align-items: center;
  gap: 4px;
  height: 20px;
  padding: 0 6px 0 4px;
  border-radius: 10px;
  background: #4a2f37;
  font-weight: 600;
}

.omnibox input {
  flex: 1;
  min-width: 0;
  margin-left: 6px;
  background: none;
  font-size: 11px;
}

.omnibox button {
  width: 27px;
}

.avatar {
  width: 17px;
  height: 17px;
  border-radius: 50%;
  background: #5460bc;
  text-align: center;
}

.pdf-bar {
  display: flex;
  align-items: center;
  height: 47px;
  padding: 0 10px 0 20px;
  background: #3c3c3c;
  color: #f0f0f0;
  font-size: 11px;
}

.pdf-name {
  width: 82px;
  margin: 0 18px 0 18px;
  font-weight: 600;
  white-space: nowrap;
}

.pdf-page {
  display: flex;
  gap: 4px;
  width: 40px;
  margin-right: 20px;
  white-space: nowrap;
}

.pdf-bar input {
  height: 18px;
  background: #202020;
  text-align: center;
}

.pdf-page input {
  flex: none;
  width: 20px;
}

.pdf-zoom {
  display: flex;
  align-items: center;
  gap: 11px;
  margin: 0 10px;
}

.pdf-zoom input {
  width: 37px;
}

.pdf-tools {
  display: flex;
  gap: 13px;
  margin: 0 15px;
}

.rule {
  width: 1px;
  height: 16px;
  background: #666;
}

.draw {
  width: 26px;
  height: 26px;
  margin: 0 5px;
  border-radius: 50%;
  background: #6c6c6c;
  color: #a8c4f8;
}

.pdf-right {
  display: flex;
  margin-left: auto;
}

.pdf-right button {
  width: 30px;
}

.pdf-view {
  position: relative;
  flex: 1;
  display: grid;
  grid-template: 1fr 10px / 1fr 11px;
  min-height: 0;
}

.pages {
  display: flex;
  flex-direction: column;
  gap: 21px;
  min-width: 0;
  min-height: 0;
  overflow: hidden;
  background: #262626;
  color: #0c0c0c;
  font-family: "Liberation Sans", Arial, sans-serif;
  font-size: 22px;
}

.page {
  position: relative;
  flex: none;
  overflow: hidden;
  background: #fff;
  white-space: nowrap;
}

.page.first {
  height: 388px;
}

.page.second {
  flex: 1;
}

.table-row {
  display: flex;
  align-items: flex-end;
  height: 25px;
  padding-left: 27px;
  border-bottom: 2px solid #202020;
  line-height: 25px;
}

.table-row.cut {
  height: 17px;
  overflow: hidden;
  line-height: 23px;
}

.exercise {
  margin: 53px 0 0 -5px;
  line-height: 30px;
}

.split {
  display: flex;
  justify-content: space-between;
  padding-right: 23px;
}

.formula {
  padding: 0 34px 0 103px;
  font-weight: 700;
}

.formula small {
  font-size: 14px;
}

.marks {
  position: absolute;
  top: 0;
  left: 0;
  fill: none;
  stroke: #000;
  stroke-width: 5;
  stroke-linecap: round;
}

.page h1 {
  padding: 72px 0 0 2px;
  font-size: 33px;
  line-height: 38px;
}

.light .thumb {
  background: #8e8e8e;
}

.scroll-y.light .thumb {
  height: 58px;
  margin-top: 135px;
}

.scroll-x.light .thumb {
  width: 296px;
  height: 7px;
  margin-left: 149px;
}

.share-bar {
  position: absolute;
  right: 218px;
  bottom: 0;
  width: 201px;
  height: 42px;
  border-radius: 14px 0 0 0;
  background: #292929;
}

/* Calculator */
.calculator {
  position: absolute;
  top: 251px;
  left: 865px;
  display: flex;
  flex-direction: column;
  box-sizing: border-box;
  width: 266px;
  height: 416px;
  border: 1px solid #443640;
  border-radius: 7px;
  overflow: hidden;
  background: linear-gradient(100deg, #291925, #28191f 50%, #301c20);
  box-shadow: 0 2px 6px rgba(0, 0, 0, 0.4);
}

.calc-title {
  display: flex;
  align-items: center;
  height: 24px;
  padding-left: 14px;
}

.calc-icon {
  width: 12px;
  height: 12px;
  margin-right: 12px;
}

.calc-title .window-buttons button {
  width: 38px;
}

.calc-mode {
  display: flex;
  align-items: center;
  gap: 12px;
  height: 42px;
  padding-left: 11px;
}

.calc-mode .icon {
  stroke-width: 1;
}

.calc-mode h2 {
  font-size: 16px;
  font-weight: 600;
}

.calc-display {
  height: 48px;
  padding-right: 10px;
  font-size: 22px;
  font-weight: 600;
  line-height: 56px;
  text-align: right;
}

.base {
  justify-content: flex-start;
  height: 19px;
  margin: 0 3px;
  border-radius: 3px;
}

.base span:first-child {
  width: 28px;
  padding-left: 8px;
  text-align: left;
}

.base span:last-child {
  padding-left: 9px;
}

.base.current {
  background: #35262d;
}

.base.current::before {
  content: "";
  width: 2px;
  height: 11px;
  margin-right: -2px;
  border-radius: 2px;
  background: #d893e4;
}

.calc-tabs {
  display: grid;
  grid-template-columns: 46px 42px 90px 39px 46px;
  height: 25px;
  border-bottom: 1px solid #35252c;
}

.calc-tabs .on {
  position: relative;
}

.calc-tabs .on::after {
  content: "";
  position: absolute;
  bottom: 4px;
  width: 13px;
  height: 2px;
  background: #d893e4;
}

.calc-tabs .off {
  color: #75696f;
}

.calc-menus {
  display: flex;
  align-items: center;
  gap: 16px;
  height: 33px;
  padding-left: 9px;
}

.calc-menus button {
  gap: 6px;
}

.keys {
  flex: 1;
  display: grid;
  grid-template-columns: repeat(5, 1fr);
  grid-auto-rows: 1fr;
  gap: 2px;
  padding: 0 2px 2px;
}

.keys button {
  border-radius: 3px;
  font-size: 12px;
}

.keys .letter {
  background: #2f2028;
  color: #75676e;
}

.keys .fn {
  background: #39292f;
}

.keys .op {
  background: #392b2c;
  font-size: 17px;
}

.keys .digit {
  background: #423238;
  font-size: 15px;
  font-weight: 500;
}

.keys .equals {
  background: #d893e4;
  color: #4a2850;
  font-size: 18px;
}

.cursor {
  position: absolute;
  top: 144px;
  left: 58px;
}

/* Stream overlays */
.alert-text {
  position: absolute;
  top: 456px;
  left: 197px;
  color: #5cb8dc;
  font: italic 700 15px/20px "DejaVu Serif Condensed", "DejaVu Serif", serif;
  text-shadow: 1px 1px 0 #4c7484;
}

.shade {
  position: absolute;
  top: 496px;
  bottom: 0;
  left: 0;
  z-index: 1;
  width: 284px;
  border-radius: 0 3px 0 0;
  background: rgba(0, 0, 0, 0.35);
}

.chat {
  position: absolute;
  top: 675px;
  left: 6px;
  z-index: 2;
  color: #aaa;
  font: 11px/18px "DejaVu Sans", sans-serif;
  list-style: none;
  white-space: nowrap;
}

.chat b {
  margin-right: 9px;
  color: #a03034;
}

.chat b.mod {
  color: #9030a4;
}

.chat li svg {
  margin-right: 5px;
}

/* Taskbar */
.taskbar {
  display: grid;
  grid-template-columns: 1fr 440px 1fr;
  height: 40px;
  background: linear-gradient(to right, #242230, #241a33 28%, #2e1832 35%, #2d1d1c 49%, #40151c 58%, #4a1220 63%, #3c1016 72%, #3a1513 83%, #2a1718);
}

.apps {
  grid-column: 2;
  display: grid;
  grid-template-columns: repeat(12, 1fr);
}

.apps button {
  position: relative;
  margin: 4px 1px 3px;
  border-radius: 4px;
}

.apps .current {
  background: #4e2029;
}

.running::after {
  content: "";
  position: absolute;
  bottom: 0;
  width: 5px;
  height: 2px;
  border-radius: 1px;
  background: #a89c9c;
}

.running.current::after {
  width: 13px;
  background: #d893e4;
}

.badge {
  position: absolute;
  top: 2px;
  right: 3px;
  min-width: 12px;
  height: 12px;
  border-radius: 6px;
  font: 9px/12px "Open Sans", sans-serif;
  text-align: center;
}

.badge.red {
  background: #d04050;
}

.badge.blue {
  background: #5460bc;
}

.badge.dot {
  min-width: 10px;
  height: 10px;
  background: #f00000;
}

.tray {
  display: flex;
  align-items: center;
  justify-content: flex-end;
  gap: 14px;
  padding-right: 16px;
  line-height: 13px;
}

.tray .mic {
  color: #c88cc8;
}

.tray .status {
  gap: 6px;
}

.tray time {
  text-align: right;
}
</style>
